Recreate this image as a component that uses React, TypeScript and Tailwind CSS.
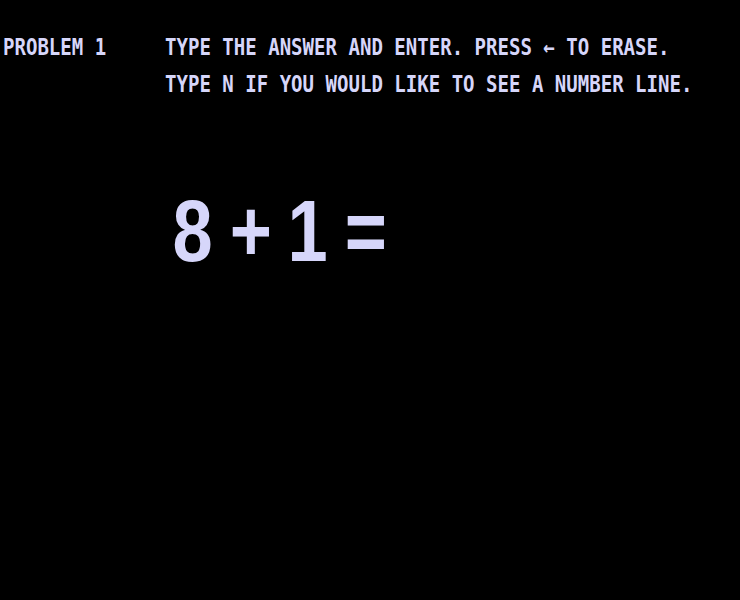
const small = 'whitespace-nowrap origin-left scale-x-[0.828] font-bold';

export default function App() {
  return (
    <div
      className="w-[740px] h-[600px] overflow-hidden bg-black text-[#d6d6fa]"
      style={{ fontFamily: '"DejaVu Sans Mono", "Liberation Mono", monospace' }}
    >
      {/* Header lines */}
      <div className="flex pt-[29px] text-[23px] leading-[37px]">
        <div className="w-[165px] shrink-0 pl-[3px]">
          <div className={small}>PROBLEM 1</div>
        </div>
        <div className="flex flex-col">
          <div className={small}>TYPE THE ANSWER AND ENTER. PRESS ← TO ERASE.</div>
          <div className={small}>TYPE N IF YOU WOULD LIKE TO SEE A NUMBER LINE.</div>
        </div>
      </div>

      {/* Problem */}
      <div
        className="flex pl-[164px] pt-[84px] text-[88px] font-bold leading-none"
        style={{ fontFamily: '"Liberation Sans", Arial, sans-serif' }}
      >
        {['8', '+', '1', '='].map((c, i) => (
          <div key={i} className="w-[57.5px] flex justify-center">
            <span className="scale-x-[0.82]">{c}</span>
          </div>
        ))}
      </div>
    </div>
  );
}
